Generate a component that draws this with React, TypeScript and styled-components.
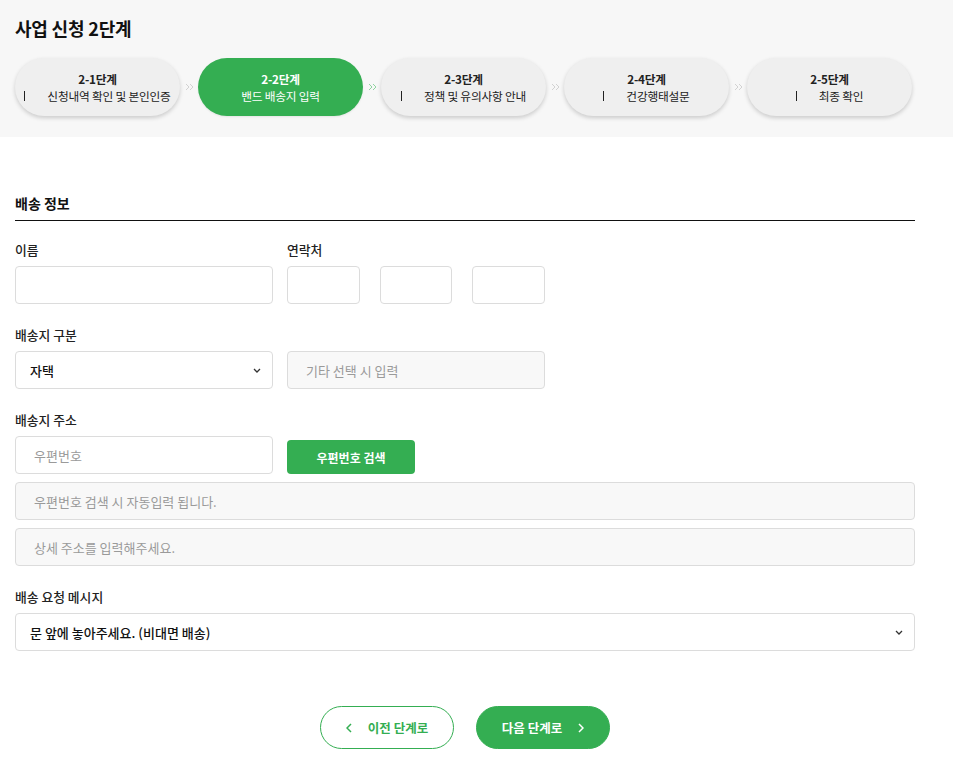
import React from "react";
import styled, { createGlobalStyle } from "styled-components";

const Global = createGlobalStyle`
  html, body { margin: 0; padding: 0; background: #fff; }
  body {
    font-family: "Noto Sans CJK KR", "Noto Sans", sans-serif;
    color: #222;
    -webkit-font-smoothing: antialiased;
  }
  * { box-sizing: border-box; }
`;

const Header = styled.header`
  background: #f7f7f7;
  padding: 13px 15px 21px;
`;

const Title = styled.h1`
  margin: 0;
  font-size: 18px;
  font-weight: 700;
  line-height: 30px;
  color: #111;
  letter-spacing: -0.2px;
`;

const Steps = styled.ol`
  list-style: none;
  margin: 15px 0 0;
  padding: 0;
  display: flex;
  align-items: center;
`;

const Step = styled.li<{ $active?: boolean }>`
  flex: none;
  width: 165px;
  height: 58px;
  border-radius: 29px;
  background: ${(p) => (p.$active ? "#34ae52" : "#efefef")};
  box-shadow: ${(p) => (p.$active ? "0 1px 2px rgba(0,0,0,0.08)" : "0 2px 4px rgba(0,0,0,0.18)")};
  color: ${(p) => (p.$active ? "#fff" : "#222")};
  display: flex;
  flex-direction: column;
  align-items: center;
  justify-content: center;
  font-size: 11.7px;
  line-height: 17px;
  letter-spacing: -0.2px;
`;

const StepNo = styled.strong`
  font-weight: 700;
`;

const StepName = styled.span`
  display: flex;
  align-items: center;
  font-weight: 400;
`;

const Bar = styled.i`
  display: block;
  width: 1px;
  height: 10px;
  background: #222;
  margin-right: 22px;
`;

const Sep = styled.li<{ $on?: boolean }>`
  flex: none;
  width: 18px;
  display: flex;
  justify-content: center;
  color: ${(p) => (p.$on ? "#8fd4a0" : "#d2d2d2")};
`;

const Main = styled.main`
  width: 900px;
  margin: 0 0 0 15px;
  padding: 55px 0 40px;
`;

const SectionTitle = styled.h2`
  margin: 0;
  font-size: 14px;
  font-weight: 700;
  line-height: 22px;
  padding-bottom: 6px;
  border-bottom: 1px solid #111;
  color: #111;
`;

const Form = styled.div`
  margin-top: 19px;
  display: flex;
  flex-direction: column;
  gap: 21px;
`;

const Row = styled.div`
  display: grid;
  grid-template-columns: 258px 258px;
  column-gap: 14px;
`;

const Field = styled.div`
  display: flex;
  flex-direction: column;
`;

const Label = styled.label`
  font-size: 12.8px;
  font-weight: 500;
  line-height: 20px;
  margin-bottom: 6px;
  color: #222;
`;

const Input = styled.input<{ $disabled?: boolean; $pad?: number }>`
  height: 38px;
  width: 100%;
  border: 1px solid #dcdcdc;
  border-radius: 4px;
  background: ${(p) => (p.$disabled ? "#f8f8f8" : "#fff")};
  padding: 0 ${(p) => p.$pad ?? 18}px;
  font-family: inherit;
  font-size: 13px;
  color: #222;
  outline: none;
  &::placeholder { color: #9a9a9a; }
`;

const Phones = styled.div`
  display: flex;
  gap: 20px;
`;

const SelectBox = styled.div`
  height: 38px;
  border: 1px solid #dcdcdc;
  border-radius: 4px;
  background: #fff;
  display: flex;
  align-items: center;
  justify-content: space-between;
  padding: 0 11px 0 14px;
  font-size: 13px;
  font-weight: 500;
  color: #111;
  cursor: pointer;
`;

const AddressStack = styled.div`
  display: flex;
  flex-direction: column;
  gap: 8px;
`;

const PostRow = styled.div`
  display: flex;
  align-items: flex-end;
  gap: 14px;
`;

const PostInputWrap = styled.div`
  width: 258px;
`;

const SearchButton = styled.button`
  width: 128px;
  height: 34px;
  border: 0;
  border-radius: 4px;
  background: #34ae52;
  color: #fff;
  font-family: inherit;
  font-size: 12px;
  font-weight: 700;
  cursor: pointer;
`;

const Actions = styled.div`
  margin-top: 55px;
  display: flex;
  justify-content: center;
  gap: 22px;
`;

const NavButton = styled.button<{ $primary?: boolean }>`
  width: 134px;
  height: 43px;
  border-radius: 22px;
  border: 1px solid #34ae52;
  background: ${(p) => (p.$primary ? "#34ae52" : "#fff")};
  color: ${(p) => (p.$primary ? "#fff" : "#34ae52")};
  font-family: inherit;
  font-size: 12.5px;
  font-weight: 700;
  display: flex;
  align-items: center;
  justify-content: center;
  gap: 16px;
  cursor: pointer;
`;

const DoubleChevron = () => (
  <svg width="9" height="8" viewBox="0 0 9 8" fill="none" stroke="currentColor" strokeWidth="1">
    <path d="M1 1l3 3-3 3" />
    <path d="M5 1l3 3-3 3" />
  </svg>
);

const Caret = () => (
  <svg width="8" height="5" viewBox="0 0 8 5" fill="none" stroke="#333" strokeWidth="1.3">
    <path d="M1 1l3 3 3-3" />
  </svg>
);

const ArrowLeft = () => (
  <svg width="6" height="10" viewBox="0 0 6 10" fill="none" stroke="currentColor" strokeWidth="1.5">
    <path d="M5 1L1 5l4 4" />
  </svg>
);

const ArrowRight = () => (
  <svg width="6" height="10" viewBox="0 0 6 10" fill="none" stroke="currentColor" strokeWidth="1.5">
    <path d="M1 1l4 4-4 4" />
  </svg>
);

const steps = [
  { no: "2-1단계", name: "신청내역 확인 및 본인인증" },
  { no: "2-2단계", name: "밴드 배송지 입력" },
  { no: "2-3단계", name: "정책 및 유의사항 안내" },
  { no: "2-4단계", name: "건강행태설문" },
  { no: "2-5단계", name: "최종 확인" },
];
const activeIndex = 1;

export default function App() {
  return (
    <>
      <Global />
      <Header>
        <Title>사업 신청 2단계</Title>
        <Steps>
          {steps.map((s, i) => (
            <React.Fragment key={s.no}>
              {i > 0 && (
                <Sep $on={i - 1 === activeIndex} aria-hidden>
                  <DoubleChevron />
                </Sep>
              )}
              <Step $active={i === activeIndex}>
                <StepNo>{s.no}</StepNo>
                <StepName>
                  {i !== activeIndex && <Bar />}
                  {s.name}
                </StepName>
              </Step>
            </React.Fragment>
          ))}
        </Steps>
      </Header>

      <Main>
        <SectionTitle>배송 정보</SectionTitle>
        <Form>
          <Row>
            <Field>
              <Label>이름</Label>
              <Input />
            </Field>
            <Field>
              <Label>연락처</Label>
              <Phones>
                <Input />
                <Input />
                <Input />
              </Phones>
            </Field>
          </Row>

          <Row>
            <Field>
              <Label>배송지 구분</Label>
              <SelectBox>
                <span>자택</span>
                <Caret />
              </SelectBox>
            </Field>
            <Field>
              <Label>&nbsp;</Label>
              <Input $disabled placeholder="기타 선택 시 입력" />
            </Field>
          </Row>

          <Field>
            <Label>배송지 주소</Label>
            <AddressStack>
              <PostRow>
                <PostInputWrap>
                  <Input placeholder="우편번호" />
                </PostInputWrap>
                <SearchButton>우편번호 검색</SearchButton>
              </PostRow>
              <Input $disabled placeholder="우편번호 검색 시 자동입력 됩니다." />
              <Input $disabled placeholder="상세 주소를 입력해주세요." />
            </AddressStack>
          </Field>

          <Field>
            <Label>배송 요청 메시지</Label>
            <SelectBox>
              <span>문 앞에 놓아주세요. (비대면 배송)</span>
              <Caret />
            </SelectBox>
          </Field>
        </Form>

        <Actions>
          <NavButton>
            <ArrowLeft />
            이전 단계로
          </NavButton>
          <NavButton $primary>
            다음 단계로
            <ArrowRight />
          </NavButton>
        </Actions>
      </Main>
    </>
  );
}
